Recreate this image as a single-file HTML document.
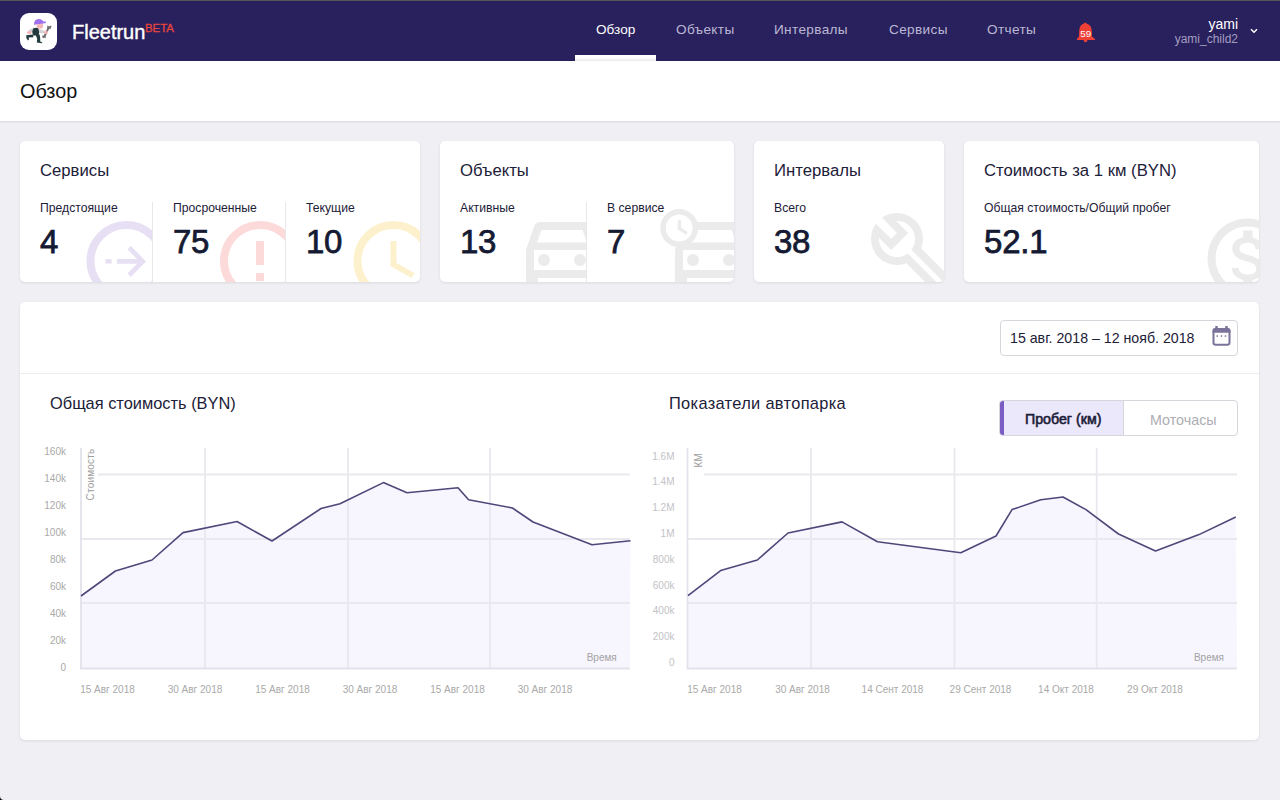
<!DOCTYPE html>
<html><head><meta charset="utf-8">
<style>
*{box-sizing:border-box;margin:0;padding:0}
html,body{width:1280px;height:800px;overflow:hidden}
body{background:#f0eff4;font-family:"Liberation Sans",sans-serif;color:#1c2038;position:relative}
div{white-space:nowrap}
#hdr{position:absolute;left:0;top:0;width:1280px;height:61px;background:#29215d;border-top:1px solid #55555a}
#logo{position:absolute;left:20px;top:12px;width:37px;height:37px;background:#fff;border-radius:9px;overflow:hidden}
#brand{position:absolute;left:72px;top:19px;color:#fff;font-size:20px;line-height:24px;-webkit-text-stroke:0.4px #fff}
#beta{position:absolute;left:145px;top:20px;color:#e8453c;font-size:11.4px;line-height:14px;-webkit-text-stroke:0.3px #e8453c}
.nav{position:absolute;top:21px;font-size:13.6px;line-height:16px;color:#bcb8d4}
.nav.act{color:#fff}
#tabbar{position:absolute;left:575px;top:54px;width:81px;height:6px;background:linear-gradient(#fff 40%,#ececee)}
#user{position:absolute;right:42px;top:15px;color:#fff;font-size:14px;line-height:16px;text-align:right}
#user2{position:absolute;right:42px;top:31px;color:#a29dc0;font-size:12px;line-height:14px;text-align:right}
#sub{position:absolute;left:0;top:61px;width:1280px;height:60px;background:#fff;box-shadow:0 1px 2px rgba(0,0,0,0.10)}
#sub h1{position:absolute;left:20px;top:19px;font-size:19.8px;line-height:22px;font-weight:normal;color:#111}
.card{position:absolute;top:141px;height:141px;background:#fff;border-radius:5px;box-shadow:0 1px 3px rgba(0,0,0,0.09);overflow:hidden}
.card .t{position:absolute;left:20px;top:20.5px;font-size:16.7px;line-height:18px;color:#1c2038}
.col{position:absolute;top:59px;height:82px;overflow:hidden}
.col .l{position:absolute;left:20px;top:1px;font-size:12.2px;line-height:14px;color:#1c2038}
.col .n{position:absolute;left:20px;top:23px;font-size:33px;line-height:38px;font-weight:normal;-webkit-text-stroke:0.75px #151a33;color:#151a33;letter-spacing:-0.3px}
.col svg{position:absolute;left:0;top:0}
.dv{position:absolute;top:61px;width:1px;height:80px;background:#e8e8ec}
#panel{position:absolute;left:20px;top:302px;width:1239px;height:438px;background:#fff;border-radius:5px;box-shadow:0 1px 3px rgba(0,0,0,0.09)}
#ptop{position:absolute;left:0;top:0;width:1239px;height:72px;border-bottom:1px solid #ececf0}
#date{position:absolute;left:980px;top:18px;width:238px;height:36px;border:1px solid #d6d6dc;border-radius:4px}
#date span{position:absolute;left:9px;top:9px;font-size:14.2px;line-height:16px;color:#1c2038}
.ctitle{position:absolute;font-size:16.4px;line-height:18px;color:#1c2038}
#tog{position:absolute;left:979px;top:98px;width:239px;height:36px;border:1px solid #d6d6dc;border-radius:4px;overflow:hidden}
#tog .a{position:absolute;left:-1px;top:-1px;width:125px;height:36px;background:#ece8fc;border-left:5px solid #7b5cc4;border-right:1px solid #d6d6dc}
#tog .a span{position:absolute;left:21px;top:11px;font-size:14.2px;line-height:16px;font-weight:normal;-webkit-text-stroke:0.6px #1c2038;color:#1c2038}
#tog .b{position:absolute;left:150px;top:10.5px;font-size:14.3px;line-height:16px;color:#adadb3}
svg text{font-family:"Liberation Sans",sans-serif}
#charts{position:absolute;left:0;top:0}
</style></head><body>
<div id="hdr">
  <div id="logo"><svg width="37" height="37" viewBox="0 0 37 37">
<path d="M28.6 14.6 L24.4 23.6" stroke="#6f6f72" stroke-width="2" fill="none"/>
<path d="M27 15 L27.6 12.2 L29 13.6 L30.4 12.4 L31.6 13.6 L30.2 16.2 Z" fill="#6f6f72"/>
<path d="M22.4 22.4 L25.8 22.8 L25.6 25.6 L24.6 24.6 L23.2 25.2 L22.2 24 Z" fill="#6f6f72"/>
<path d="M8.2 17.6 Q11 15.2 14.5 15.2 L16 18.5 L10.8 19.3 Z" fill="#d0d0d3"/>
<path d="M17.4 15.6 L24.2 17.8 L24 20.6 L17.2 19.4 Z" fill="#d3d3d6"/>
<path d="M13.2 15.4 Q15.8 14.2 18.2 15 L19.2 19 L18.6 22.4 L13.2 22.6 L12.2 19 Z" fill="#22393d"/>
<path d="M13 21.6 L6.2 22.2 L6.4 25.2 L8 27.4 L9 26.4 L8.6 24.4 L13.4 24.2 Z" fill="#22393d"/>
<path d="M15.6 21.8 L19.6 21.6 L20.2 25 L20.2 28.6 L22.4 29.4 L22 30.2 L16.8 29.6 L17.2 26 Z" fill="#22393d"/>
<ellipse cx="9.3" cy="19.4" rx="2.4" ry="1.5" fill="#f4b5b8"/>
<ellipse cx="25.8" cy="19.2" rx="1.9" ry="1.7" fill="#f4b5b8"/>
<path d="M16.3 11.2 L23 11 Q23.4 13.6 22.6 15.2 L18.4 15.8 Q16.4 14.2 16.3 11.2Z" fill="#f4b6b9"/>
<path d="M14 12 Q13.8 6.2 18.8 6 Q22.4 6.2 23.2 8.6 L26 8.4 L25.8 10 L22.2 10.8 L16.4 11.2 Z" fill="#a070ef"/>
</svg></div>
  <div id="brand">Fleetrun</div><div id="beta">BETA</div>
  <div class="nav act" style="left:596px">Обзор</div>
  <div class="nav" style="left:676px;letter-spacing:0.35px">Объекты</div>
  <div class="nav" style="left:774px;letter-spacing:0.35px">Интервалы</div>
  <div class="nav" style="left:889px;letter-spacing:0.35px">Сервисы</div>
  <div class="nav" style="left:987px;letter-spacing:0.35px">Отчеты</div>
  <div id="tabbar"></div>
  <svg style="position:absolute;left:1070px;top:14px" width="30" height="30" viewBox="0 0 30 30">
    <path d="M14 8.4 Q15.2 6.4 16.4 8.4 Q21.6 9.6 21.8 16 L22 21.6 L25 24 L25 25 L6.9 25 L6.9 24 L9 21.6 L9.2 16 Q9.4 9.6 14 8.4 Z" fill="#ee4036"/>
    <path d="M13.6 25 L17.4 25 Q17.4 27.2 15.5 27.2 Q13.6 27.2 13.6 25Z" fill="#ee4036"/>
    <text x="15.8" y="21.6" font-size="9.8" fill="#fff" text-anchor="middle">59</text>
  </svg>
  <div id="user">yami</div>
  <div id="user2">yami_child2</div>
  <svg style="position:absolute;left:1248px;top:25px" width="12" height="10" viewBox="0 0 12 10"><path d="M3 3.2 L6 6.2 L9 3.2" fill="none" stroke="#fff" stroke-width="1.5"/></svg>
</div>
<div id="sub"><h1>Обзор</h1></div>

<div class="card" style="left:20px;width:400px">
  <div class="t">Сервисы</div>
  <div class="col" style="left:0;width:132px">
    <svg width="132" height="82"><g transform="translate(106.5,61)"><circle r="36" fill="none" stroke="#e7e0f4" stroke-width="8"/><rect x="-21.1" y="-1.8" width="6.2" height="4.4" fill="#e7e0f4"/><path d="M-9.5 0.4 H15" stroke="#e7e0f4" stroke-width="4.6" fill="none"/><path d="M2.6 -13.4 L16.2 0.4 L2.6 14.2" stroke="#e7e0f4" stroke-width="4.8" fill="none"/></g></svg>
    <div class="l">Предстоящие</div><div class="n">4</div></div>
  <div class="dv" style="left:132px"></div>
  <div class="col" style="left:133px;width:132px">
    <svg width="132" height="82"><g transform="translate(107,61)"><circle r="36" fill="none" stroke="#fbdad9" stroke-width="8"/><rect x="-4" y="-20" width="8" height="24" fill="#fbdad9"/><rect x="-4" y="12" width="8" height="8" fill="#fbdad9"/></g></svg>
    <div class="l">Просроченные</div><div class="n">75</div></div>
  <div class="dv" style="left:265px"></div>
  <div class="col" style="left:266px;width:134px">
    <svg width="134" height="82"><g transform="translate(107.5,61)"><circle r="36" fill="none" stroke="#fdf1cd" stroke-width="8"/><path d="M0 -20 V3.5 L19.5 14.5" stroke="#fdf1cd" stroke-width="6" fill="none" stroke-linejoin="miter"/></g></svg>
    <div class="l">Текущие</div><div class="n">10</div></div>
</div>
<div class="card" style="left:440px;width:294px">
  <div class="t">Объекты</div>
  <div class="col" style="left:0;width:146px">
    <svg width="146" height="82"><g transform="translate(74,2) scale(4)" fill="#ebebeb"><path d="M18.92 6.01C18.72 5.420 18.16 5 17.5 5h-11c-.66 0-1.21.42-1.42 1.01L3 12v8c0 .55.45 1 1 1h1c.55 0 1-.45 1-1v-1h12v1c0 .55.45 1 1 1h1c.55 0 1-.45 1-1v-8l-2.08-5.99zM6.85 7h10.29l1.08 3.11H5.77L6.85 7zM19 17H5v-5h14v5z"/><circle cx="7.5" cy="14.5" r="1.5"/><circle cx="16.5" cy="14.5" r="1.5"/></g></svg>
    <div class="l">Активные</div><div class="n">13</div></div>
  <div class="dv" style="left:146px"></div>
  <div class="col" style="left:147px;width:147px">
    <svg width="147" height="82"><g transform="translate(76,2) scale(4)" fill="#ebebeb"><path d="M18.92 6.01C18.72 5.420 18.16 5 17.5 5h-11c-.66 0-1.21.42-1.42 1.01L3 12v8c0 .55.45 1 1 1h1c.55 0 1-.45 1-1v-1h12v1c0 .55.45 1 1 1h1c.55 0 1-.45 1-1v-8l-2.08-5.99zM6.85 7h10.29l1.08 3.11H5.77L6.85 7zM19 17H5v-5h14v5z"/><circle cx="7.5" cy="14.5" r="1.5"/><circle cx="16.5" cy="14.5" r="1.5"/></g>
    <g transform="translate(92.2,28)"><circle r="18" fill="#fff"/><circle r="16.2" fill="#fff" stroke="#ebebeb" stroke-width="5.6"/><path d="M0.2 -8 V0.6 L7.6 5.4" stroke="#ebebeb" stroke-width="3.4" fill="none"/></g></svg>
    <div class="l">В сервисе</div><div class="n">7</div></div>
</div>
<div class="card" style="left:754px;width:190px">
  <div class="t">Интервалы</div>
  <div class="col" style="left:0;width:190px">
    <svg width="190" height="82"><g transform="translate(143,39)">
      <clipPath id="wc"><circle r="26"/></clipPath>
      <circle r="26" fill="#ebebeb"/>
      <path d="M0 0 L60 60" stroke="#ebebeb" stroke-width="21"/>
      <circle r="18" fill="#fff"/>
      <path d="M0 0 L60 60" stroke="#fff" stroke-width="5.2"/>
      <polygon clip-path="url(#wc)" points="-0.9,-17.9 11.1,-5.9 -5.75,11 -17.75,-1 -40,-23 -23,-40" fill="#ebebeb"/>
      <polygon points="-14.7,-21.25 -0.1,-5.9 -5.75,-0.25 -21.1,-14.9 -40,-34 -34,-40" fill="#fff"/>
    </g></svg>
    <div class="l">Всего</div><div class="n">38</div></div>
</div>
<div class="card" style="left:964px;width:295px">
  <div class="t">Стоимость за 1 км (BYN)</div>
  <div class="col" style="left:0;width:295px">
    <svg width="295" height="82"><g transform="translate(235.6,10.6) scale(4)" fill="#ebebeb"><path d="M12 2C6.48 2 2 6.48 2 12s4.48 10 10 10 10-4.48 10-10S17.52 2 12 2zm0 18c-4.41 0-8-3.59-8-8s3.59-8 8-8 8 3.59 8 8-3.59 8-8 8zm.31-8.86c-1.77-.45-2.340-.94-2.34-1.67 0-.84.79-1.43 2.1-1.43 1.38 0 1.9.66 1.94 1.64h1.71c-.05-1.34-.87-2.57-2.49-2.97V5H10.9v1.690c-1.51.32-2.72 1.3-2.72 2.81 0 1.79 1.49 2.69 3.66 3.21 1.95.46 2.34 1.15 2.34 1.87 0 .53-.39 1.39-2.1 1.39-1.6 0-2.23-.72-2.32-1.64H8.04c.1 1.7 1.36 2.66 2.86 2.970V19h2.34v-1.67c1.52-.29 2.72-1.16 2.73-2.77-.01-2.2-1.9-2.96-3.660-3.42z"/></g></svg>
    <div class="l">Общая стоимость/Общий пробег</div><div class="n" style="letter-spacing:-0.2px">52.1</div></div>
</div>

<div id="panel">
  <div id="ptop"><div id="date"><span>15 авг. 2018 – 12 нояб. 2018</span>
    <svg style="position:absolute;left:211px;top:4px" width="22" height="24" viewBox="0 0 22 24"><rect x="1.5" y="4" width="16" height="15.75" rx="2.2" fill="none" stroke="#7b7399" stroke-width="2"/><path d="M0.5 6 Q0.5 3 3.5 3 H15.5 Q18.5 3 18.5 6 V7.8 H0.5Z" fill="#7b7399"/><rect x="3.25" y="1" width="2.5" height="3" fill="#7b7399"/><rect x="13.25" y="1" width="2.5" height="3" fill="#7b7399"/><rect x="4.5" y="10.3" width="1.5" height="1.5" fill="#7b7399"/><rect x="8.75" y="10.3" width="1.5" height="1.5" fill="#7b7399"/><rect x="12.75" y="10.3" width="1.5" height="1.5" fill="#7b7399"/></svg>
  </div></div>
  <div class="ctitle" style="left:30px;top:92px">Общая стоимость (BYN)</div>
  <div class="ctitle" style="left:649px;top:92px;letter-spacing:0.33px">Показатели автопарка</div>
  <div id="tog"><div class="a"><span>Пробег (км)</span></div><div class="b">Моточасы</div></div>
</div>
<svg style="position:absolute;left:0;top:796px" width="4" height="4" viewBox="0 0 4 4"><path d="M0 0 V4 H4 Q0 4 0 0Z" fill="#000"/></svg>
<!--CHARTS-->
<svg id="charts" width="1280" height="800" viewBox="0 0 1280 800">
<polygon points="81,668.5 81,596 115.4,571 152,560 183,532.6 237,521.5 272,541 321,508.5 340,503.7 383.4,482.6 407,492.7 458,487.8 468.6,499.8 512.5,508 533,522 592,544.7 630.5,540.8 629.8,668.5" fill="#f7f5fe"/>
<line x1="81" y1="474.5" x2="629.8" y2="474.5" stroke="#e9e8ee" stroke-width="1.8"/>
<line x1="81" y1="539" x2="629.8" y2="539" stroke="#e9e8ee" stroke-width="1.8"/>
<line x1="81" y1="603" x2="629.8" y2="603" stroke="#e9e8ee" stroke-width="1.8"/>
<line x1="205" y1="448" x2="205" y2="668.5" stroke="#e9e8ee" stroke-width="1.8"/>
<line x1="348" y1="448" x2="348" y2="668.5" stroke="#e9e8ee" stroke-width="1.8"/>
<line x1="490" y1="448" x2="490" y2="668.5" stroke="#e9e8ee" stroke-width="1.8"/>
<rect x="81.9" y="448" width="16.1" height="30" fill="#fff"/>
<line x1="81" y1="448" x2="81" y2="669.4" stroke="#e3e2ea" stroke-width="1.8"/>
<line x1="81" y1="668.5" x2="629.8" y2="668.5" stroke="#e3e2ea" stroke-width="1.8"/>
<polyline points="81,596 115.4,571 152,560 183,532.6 237,521.5 272,541 321,508.5 340,503.7 383.4,482.6 407,492.7 458,487.8 468.6,499.8 512.5,508 533,522 592,544.7 630.5,540.8" fill="none" stroke="#4d4879" stroke-width="1.6" stroke-linejoin="round"/>
<text x="66" y="455.1" font-size="10" fill="#a9a9a9" text-anchor="end">160k</text>
<text x="66" y="482.1" font-size="10" fill="#a9a9a9" text-anchor="end">140k</text>
<text x="66" y="509.1" font-size="10" fill="#a9a9a9" text-anchor="end">120k</text>
<text x="66" y="536.1" font-size="10" fill="#a9a9a9" text-anchor="end">100k</text>
<text x="66" y="563.1" font-size="10" fill="#a9a9a9" text-anchor="end">80k</text>
<text x="66" y="590.1" font-size="10" fill="#a9a9a9" text-anchor="end">60k</text>
<text x="66" y="617.1" font-size="10" fill="#a9a9a9" text-anchor="end">40k</text>
<text x="66" y="644.1" font-size="10" fill="#a9a9a9" text-anchor="end">20k</text>
<text x="66" y="671.1" font-size="10" fill="#a9a9a9" text-anchor="end">0</text>
<text x="107.5" y="693" font-size="10" fill="#a9a9a9" text-anchor="middle">15 Авг 2018</text>
<text x="195" y="693" font-size="10" fill="#a9a9a9" text-anchor="middle">30 Авг 2018</text>
<text x="282.5" y="693" font-size="10" fill="#a9a9a9" text-anchor="middle">15 Авг 2018</text>
<text x="370" y="693" font-size="10" fill="#a9a9a9" text-anchor="middle">30 Авг 2018</text>
<text x="457.5" y="693" font-size="10" fill="#a9a9a9" text-anchor="middle">15 Авг 2018</text>
<text x="545" y="693" font-size="10" fill="#a9a9a9" text-anchor="middle">30 Авг 2018</text>
<text x="616.8" y="661" font-size="10" fill="#a3a3a3" text-anchor="end">Время</text>
<text transform="translate(93.5,448.5) rotate(-90)" x="0" y="0" font-size="10" letter-spacing="0.2" fill="#9e9e9e" text-anchor="end">Стоимость</text>
<polygon points="687.5,668.5 688,595.6 720.6,570.6 757.3,560 788,533 842,521.9 877.5,541.7 960.8,552.8 996,536 1012,509.6 1040.8,499.8 1063,497 1086,509.6 1118.5,534 1155.5,551 1199,534.6 1235.8,517 1237,668.5" fill="#f7f5fe"/>
<line x1="687.5" y1="474.5" x2="1237" y2="474.5" stroke="#e9e8ee" stroke-width="1.8"/>
<line x1="687.5" y1="539" x2="1237" y2="539" stroke="#e9e8ee" stroke-width="1.8"/>
<line x1="687.5" y1="603" x2="1237" y2="603" stroke="#e9e8ee" stroke-width="1.8"/>
<line x1="811" y1="448" x2="811" y2="668.5" stroke="#e9e8ee" stroke-width="1.8"/>
<line x1="954.5" y1="448" x2="954.5" y2="668.5" stroke="#e9e8ee" stroke-width="1.8"/>
<line x1="1096.7" y1="448" x2="1096.7" y2="668.5" stroke="#e9e8ee" stroke-width="1.8"/>
<rect x="688.4" y="448" width="15.6" height="30" fill="#fff"/>
<line x1="687.5" y1="448" x2="687.5" y2="669.4" stroke="#e3e2ea" stroke-width="1.8"/>
<line x1="687.5" y1="668.5" x2="1237" y2="668.5" stroke="#e3e2ea" stroke-width="1.8"/>
<polyline points="688,595.6 720.6,570.6 757.3,560 788,533 842,521.9 877.5,541.7 960.8,552.8 996,536 1012,509.6 1040.8,499.8 1063,497 1086,509.6 1118.5,534 1155.5,551 1199,534.6 1235.8,517" fill="none" stroke="#4d4879" stroke-width="1.6" stroke-linejoin="round"/>
<text x="674.5" y="459.6" font-size="10" fill="#c2c2c6" text-anchor="end">1.6M</text>
<text x="674.5" y="485.40000000000003" font-size="10" fill="#c2c2c6" text-anchor="end">1.4M</text>
<text x="674.5" y="511.20000000000005" font-size="10" fill="#c2c2c6" text-anchor="end">1.2M</text>
<text x="674.5" y="537.0" font-size="10" fill="#c2c2c6" text-anchor="end">1M</text>
<text x="674.5" y="562.8000000000001" font-size="10" fill="#c2c2c6" text-anchor="end">800k</text>
<text x="674.5" y="588.6" font-size="10" fill="#c2c2c6" text-anchor="end">600k</text>
<text x="674.5" y="614.4" font-size="10" fill="#c2c2c6" text-anchor="end">400k</text>
<text x="674.5" y="640.2" font-size="10" fill="#c2c2c6" text-anchor="end">200k</text>
<text x="674.5" y="666.0" font-size="10" fill="#c2c2c6" text-anchor="end">0</text>
<text x="714.5" y="693" font-size="10" fill="#a9a9a9" text-anchor="middle">15 Авг 2018</text>
<text x="802.5" y="693" font-size="10" fill="#a9a9a9" text-anchor="middle">30 Авг 2018</text>
<text x="892.5" y="693" font-size="10" fill="#a9a9a9" text-anchor="middle">14 Сент 2018</text>
<text x="980.5" y="693" font-size="10" fill="#a9a9a9" text-anchor="middle">29 Сент 2018</text>
<text x="1066" y="693" font-size="10" fill="#a9a9a9" text-anchor="middle">14 Окт 2018</text>
<text x="1155" y="693" font-size="10" fill="#a9a9a9" text-anchor="middle">29 Окт 2018</text>
<text x="1224" y="661" font-size="10" fill="#a3a3a3" text-anchor="end">Время</text>
<text transform="translate(702,453) rotate(-90)" x="0" y="0" font-size="10" letter-spacing="0.2" fill="#9e9e9e" text-anchor="end">КМ</text>
</svg>
</body></html>
